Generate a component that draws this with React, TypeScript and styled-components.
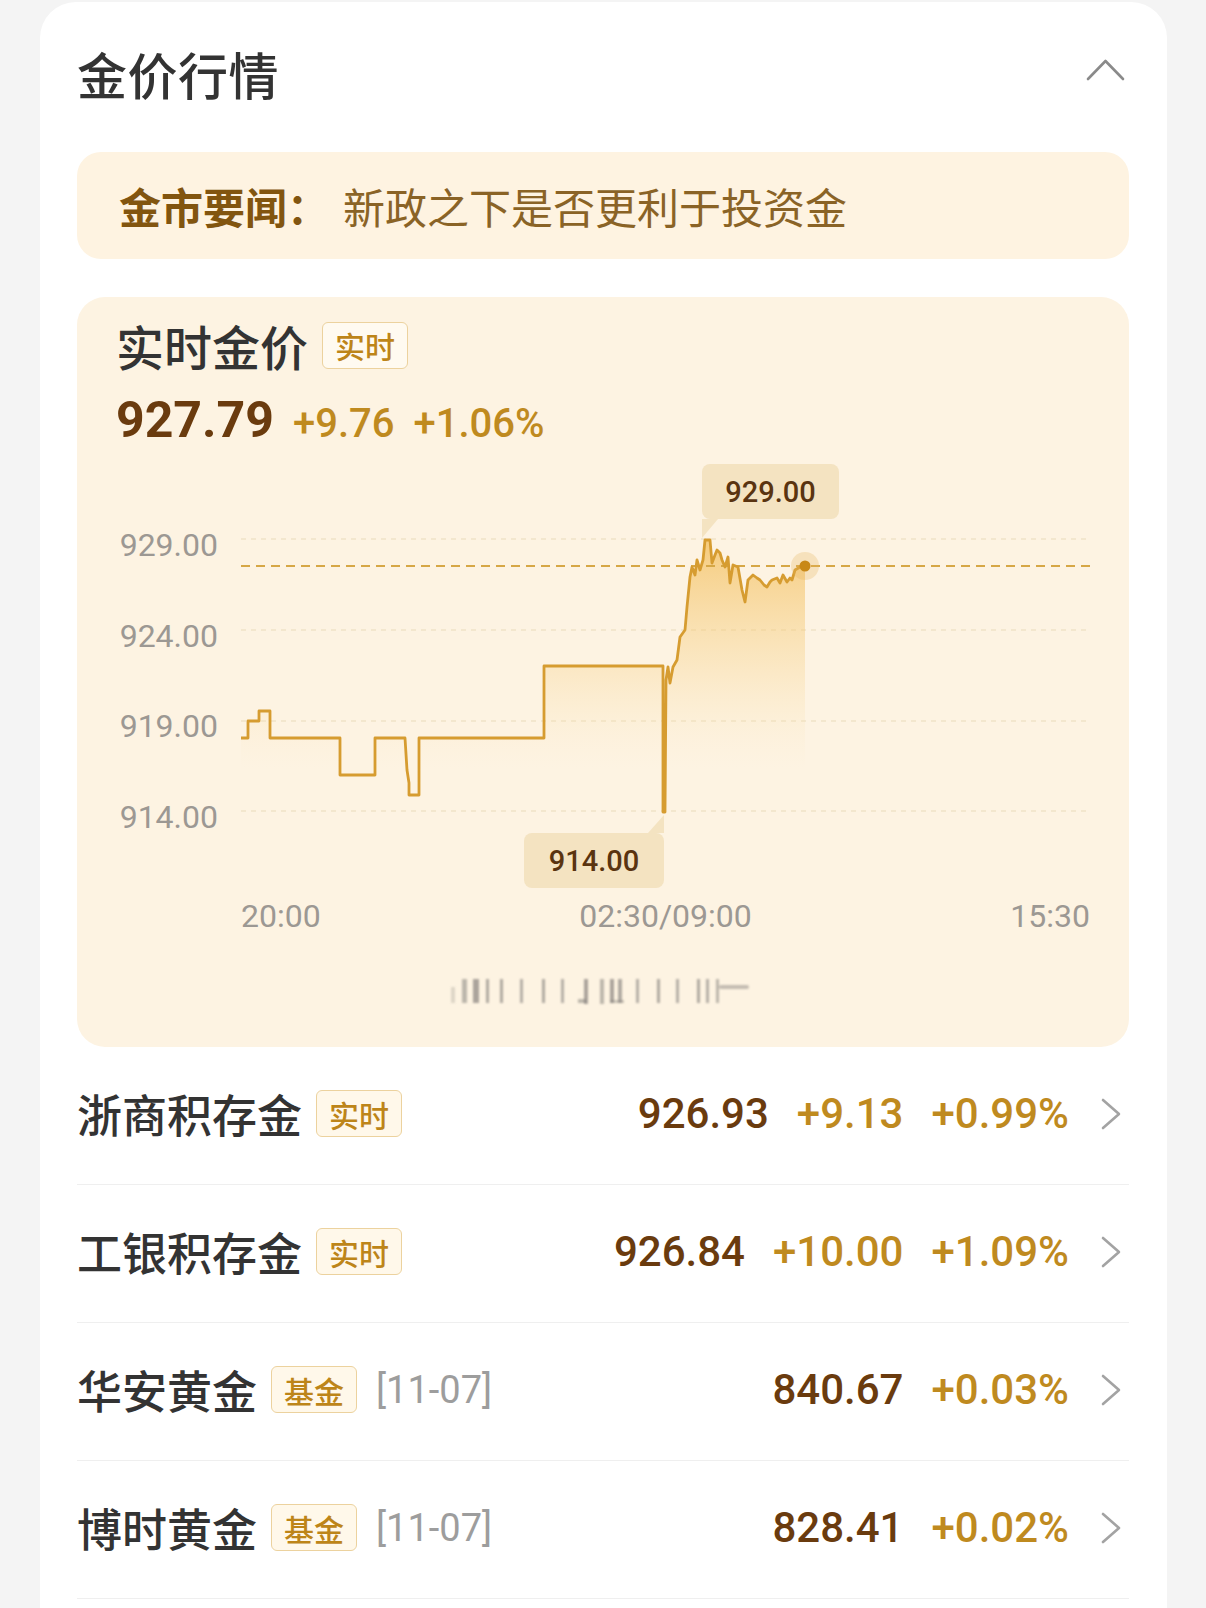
import React from 'react';
import styled, { createGlobalStyle } from 'styled-components';

const GlobalStyle = createGlobalStyle`
  body {
    margin: 0;
    background: #f4f4f4;
    font-family: "Noto Sans CJK SC", "Noto Sans", sans-serif;
  }
`;

const NUM_FONT = `"Roboto", "Liberation Sans", sans-serif`;

const rows = [
  { name: '浙商积存金', tag: '实时', price: '926.93', change: '+9.13', pct: '+0.99%' },
  { name: '工银积存金', tag: '实时', price: '926.84', change: '+10.00', pct: '+1.09%' },
  { name: '华安黄金', tag: '基金', date: '[11-07]', price: '840.67', pct: '+0.03%' },
  { name: '博时黄金', tag: '基金', date: '[11-07]', price: '828.41', pct: '+0.02%' },
];

const yLabels = ['929.00', '924.00', '919.00', '914.00'];
const gridY = [539, 630, 721, 811];

const linePath =
  'M241,738 H248 V721 H259 V711 H270 V738 H340 V775 H375 V738 H405 L407,770 L409,783 V795 H419 V738 H544 V666 H663 V812 ' +
  'L665,812 L666,680 L668,667 L670,683 L673,667 L677,660 L680,637 L685,630 L687,607 L690,577 L692,567 L695,575 L697,560 ' +
  'L700,570 L703,560 L705,540 L710,540 L712,563 L715,555 L717,550 L720,553 L722,560 L725,567 L728,557 L730,583 L733,565 ' +
  'L738,567 L742,590 L745,602 L748,580 L753,575 L757,578 L760,580 L764,585 L767,587 L770,582 L772,580 L777,578 L780,583 ' +
  'L783,575 L787,582 L790,578 L792,580 L795,570 L800,567 L805,566';

const ChevronUp = () => (
  <svg width="39" height="22" viewBox="0 0 39 22">
    <polyline points="2,20 19.5,2 37,20" fill="none" stroke="#8a8a8a" strokeWidth="2.6" strokeLinecap="round" strokeLinejoin="round" />
  </svg>
);

const ChevronRight = () => (
  <svg width="20" height="32" viewBox="0 0 20 32">
    <polyline points="2,2 18,16 2,30" fill="none" stroke="#a3a3a3" strokeWidth="2.6" strokeLinecap="round" strokeLinejoin="round" />
  </svg>
);

const PlotSvg = () => (
  <svg width="849" height="450" viewBox="241 450 849 450">
    <defs>
      <linearGradient id="area" x1="0" y1="540" x2="0" y2="770" gradientUnits="userSpaceOnUse">
        <stop offset="0" stopColor="#f2b84c" stopOpacity="0.68" />
        <stop offset="0.55" stopColor="#f6cf82" stopOpacity="0.32" />
        <stop offset="1" stopColor="#fbe6bd" stopOpacity="0" />
      </linearGradient>
    </defs>
    {gridY.map((y) => (
      <line key={y} x1="241" x2="1090" y1={y} y2={y} stroke="#f0e3c8" strokeWidth="1.5" strokeDasharray="5 5" />
    ))}
    <path d={`${linePath} V811 H241 Z`} fill="url(#area)" />
    <line x1="241" x2="1090" y1="566" y2="566" stroke="#d6a746" strokeWidth="1.8" strokeDasharray="9 6" />
    <path d={linePath} fill="none" stroke="#d69c30" strokeWidth="2.8" strokeLinejoin="round" />
    <circle cx="805" cy="566" r="14" fill="#e6b25a" fillOpacity="0.28" />
    <circle cx="805" cy="566" r="5.5" fill="#c88818" />
  </svg>
);

const Blur = () => (
  <svg width="302" height="40" viewBox="449 975 302 40">
    <defs>
      <filter id="soft">
        <feGaussianBlur stdDeviation="1.3" />
      </filter>
    </defs>
    <g filter="url(#soft)" fill="#7e7a76">
      <rect x="451" y="989" width="4" height="16" opacity="0.25" />
      <rect x="462" y="981" width="5" height="24" opacity="0.5" />
      <rect x="473" y="981" width="6" height="24" opacity="0.65" />
      <rect x="486" y="981" width="3" height="24" opacity="0.6" />
      <rect x="500" y="981" width="3" height="24" opacity="0.6" />
      <rect x="520" y="981" width="3" height="24" opacity="0.55" />
      <rect x="542" y="981" width="3" height="24" opacity="0.6" />
      <rect x="561" y="981" width="3" height="24" opacity="0.55" />
      <rect x="584" y="981" width="4" height="25" opacity="0.65" />
      <rect x="578" y="1001" width="8" height="4" opacity="0.5" />
      <rect x="600" y="981" width="4" height="25" opacity="0.5" />
      <rect x="610" y="981" width="4" height="24" opacity="0.65" />
      <rect x="618" y="981" width="4" height="24" opacity="0.6" />
      <rect x="610" y="1002" width="14" height="3" opacity="0.4" />
      <rect x="636" y="981" width="3" height="24" opacity="0.55" />
      <rect x="657" y="981" width="3" height="24" opacity="0.6" />
      <rect x="676" y="981" width="3" height="24" opacity="0.55" />
      <rect x="697" y="981" width="3" height="24" opacity="0.6" />
      <rect x="706" y="981" width="3" height="24" opacity="0.55" />
      <rect x="716" y="981" width="3" height="24" opacity="0.5" />
      <rect x="719" y="987" width="30" height="4" rx="2" opacity="0.45" />
    </g>
  </svg>
);

export default function App() {
  return (
    <>
      <GlobalStyle />
      <Page>
        <Card>
          <Header>
            <Title>金价行情</Title>
            <CollapseIcon>
              <ChevronUp />
            </CollapseIcon>
          </Header>

          <NewsBox>
            <NewsLabel>金市要闻：</NewsLabel>
            <NewsText>新政之下是否更利于投资金</NewsText>
          </NewsBox>

          <ChartCard>
            <ChartTitleRow>
              <ChartTitle>实时金价</ChartTitle>
              <Tag $large>实时</Tag>
            </ChartTitleRow>
            <PriceRow>
              <BigPrice>927.79</BigPrice>
              <Change $size={40}>+9.76</Change>
              <Change $size={40}>+1.06%</Change>
            </PriceRow>

            <ChartArea>
              <YAxis>
                {yLabels.map((l) => (
                  <YLabel key={l}>{l}</YLabel>
                ))}
              </YAxis>
              <PlotSvg />
              <Tooltip $top>929.00</Tooltip>
              <Tooltip>914.00</Tooltip>
            </ChartArea>

            <XAxis>
              <XLabel>20:00</XLabel>
              <XLabel>02:30/09:00</XLabel>
              <XLabel>15:30</XLabel>
            </XAxis>

            <BlurMark>
              <Blur />
            </BlurMark>
          </ChartCard>

          <List>
            {rows.map((r) => (
              <Row key={r.name}>
                <RowLeft>
                  <RowName>{r.name}</RowName>
                  <Tag>{r.tag}</Tag>
                  {r.date && <DateText>{r.date}</DateText>}
                </RowLeft>
                <RowRight>
                  <Values>
                    <Price>{r.price}</Price>
                    {r.change && <Change $size={42}>{r.change}</Change>}
                    <Change $size={42}>{r.pct}</Change>
                  </Values>
                  <Arrow>
                    <ChevronRight />
                  </Arrow>
                </RowRight>
              </Row>
            ))}
          </List>
        </Card>
      </Page>
    </>
  );
}

const Page = styled.div`
  padding: 2px 39px 0 40px;
`;

const Card = styled.div`
  background: #ffffff;
  border-radius: 36px 36px 0 0;
  padding: 0 38px 0 37px;
  min-height: 1620px;
`;

const Header = styled.div`
  height: 150px;
  display: flex;
  align-items: center;
  justify-content: space-between;
`;

const Title = styled.div`
  font-size: 50px;
  line-height: 1;
  font-weight: 500;
  color: #333333;
  letter-spacing: 0.5px;
  margin-bottom: 8px;
`;

const CollapseIcon = styled.div`
  display: flex;
  margin: 0 4px 14px 0;
`;

const NewsBox = styled.div`
  height: 107px;
  border-radius: 24px;
  background: #fef3e1;
  display: flex;
  align-items: center;
  padding-left: 42px;
`;

const NewsLabel = styled.span`
  font-size: 42px;
  font-weight: 700;
  color: #82550f;
`;

const NewsText = styled.span`
  font-size: 42px;
  color: #8a6326;
  margin-left: 14px;
`;

const ChartCard = styled.div`
  margin-top: 38px;
  height: 750px;
  box-sizing: border-box;
  border-radius: 28px;
  background: #fdf3e2;
  padding: 18px 39px 0;
  display: flex;
  flex-direction: column;
`;

const ChartTitleRow = styled.div`
  height: 60px;
  display: flex;
  align-items: center;
`;

const ChartTitle = styled.div`
  font-size: 48px;
  line-height: 1;
  font-weight: 500;
  color: #333333;
  margin-right: 14px;
`;

const Tag = styled.span<{ $large?: boolean }>`
  display: inline-flex;
  align-items: center;
  justify-content: center;
  box-sizing: border-box;
  height: 47px;
  padding: 0 12px;
  border: 1.5px solid #ecd29e;
  border-radius: 6px;
  background: ${(p) => (p.$large ? '#fffaf0' : '#fff8ea')};
  color: #bd8519;
  font-size: 30px;
  font-weight: 500;
  line-height: 1;
`;

const PriceRow = styled.div`
  margin-top: 15px;
  height: 60px;
  display: flex;
  align-items: baseline;
  gap: 19px;
  line-height: 60px;
`;

const BigPrice = styled.span`
  font-family: ${NUM_FONT};
  font-size: 50px;
  font-weight: 700;
  color: #6a3b0e;
`;

const Change = styled.span<{ $size: number }>`
  font-family: ${NUM_FONT};
  font-size: ${(p) => p.$size}px;
  font-weight: 500;
  color: #bf8a1f;
`;

const ChartArea = styled.div`
  position: relative;
  height: 450px;
  display: grid;
  grid-template-columns: 102px 849px;
  column-gap: 23px;
`;

const YAxis = styled.div`
  padding-top: 50px;
  display: flex;
  flex-direction: column;
  align-items: flex-end;
`;

const YLabel = styled.div`
  height: 90.5px;
  line-height: 90.5px;
  font-family: ${NUM_FONT};
  font-size: 32px;
  color: #9c9893;
`;

const Tooltip = styled.div<{ $top?: boolean }>`
  position: absolute;
  left: ${(p) => (p.$top ? 586 : 408)}px;
  top: ${(p) => (p.$top ? 14 : 383)}px;
  width: ${(p) => (p.$top ? 137 : 140)}px;
  height: 55px;
  border-radius: 8px;
  background: #f4e3c1;
  display: flex;
  align-items: center;
  justify-content: center;
  font-family: ${NUM_FONT};
  font-size: 29px;
  font-weight: 500;
  color: #5a3410;

  &::after {
    content: '';
    position: absolute;
    width: 0;
    height: 0;
    ${(p) =>
      p.$top
        ? `left: 0; top: 100%;
           border-top: 19px solid #f4e3c1;
           border-right: 16px solid transparent;`
        : `right: 0; bottom: 100%;
           border-bottom: 18px solid #f4e3c1;
           border-left: 16px solid transparent;`}
  }
`;

const XAxis = styled.div`
  margin-left: 125px;
  height: 32px;
  display: flex;
  justify-content: space-between;
  align-items: center;
`;

const XLabel = styled.span`
  font-family: ${NUM_FONT};
  font-size: 32px;
  line-height: 32px;
  color: #9c9893;
`;

const BlurMark = styled.div`
  margin: 41px 0 0 333px;
  display: flex;
`;

const List = styled.div`
  display: flex;
  flex-direction: column;
`;

const Row = styled.div`
  height: 133px;
  padding-bottom: 4px;
  border-bottom: 1.5px solid #efefef;
  display: flex;
  align-items: center;
  justify-content: space-between;
`;

const RowLeft = styled.div`
  display: flex;
  align-items: center;
  gap: 14px;
`;

const RowName = styled.span`
  font-size: 45px;
  line-height: 1;
  font-weight: 500;
  color: #333333;
`;

const DateText = styled.span`
  margin-left: 5px;
  font-family: ${NUM_FONT};
  font-size: 38px;
  color: #9d9d9d;
`;

const RowRight = styled.div`
  display: flex;
  align-items: center;
  padding-right: 8px;
`;

const Values = styled.div`
  display: flex;
  align-items: baseline;
  gap: 28px;
`;

const Price = styled.span`
  font-family: ${NUM_FONT};
  font-size: 42px;
  font-weight: 500;
  color: #6a3b0e;
`;

const Arrow = styled.div`
  display: flex;
  margin-left: 32px;
`;
